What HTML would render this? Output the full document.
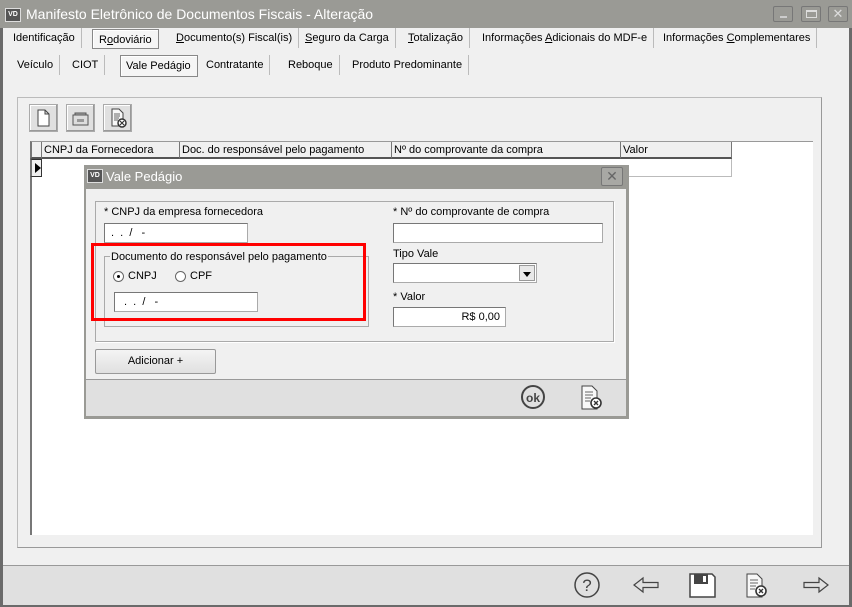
<!DOCTYPE html>
<html><head><meta charset="utf-8"><style>
*{box-sizing:border-box;margin:0;padding:0}
body{width:852px;height:607px;overflow:hidden;background:#6a6a6a;font-family:"Liberation Sans","DejaVu Sans",sans-serif;font-size:11px;color:#000;position:relative}
.abs{position:absolute}
.win{left:3px;top:0;width:846px;height:604px;background:#f0f0f0}
.title{left:0;top:0;width:852px;height:28px;background:#9a9a95;color:#fff;font-size:14px;line-height:28px}
.vd{display:inline-block;background:#555;color:#fff;font-size:7px;font-weight:bold;border:1px solid #ddd;width:16px;height:14px;line-height:12px;text-align:center;vertical-align:middle}
.tab{top:0;height:20px;line-height:20px;padding:0 6px;border-right:1px solid #bbb}
.sel{border:1px solid #888;background:#f5f5f5;box-shadow:inset 1px 1px #fff}
.cb{width:20px;height:16px;border:1px solid #777;border-radius:2px;top:6px}
.tb{width:29px;height:28px;top:104px;background:#e0e0e0;border:1px solid #aaa;box-shadow:inset -1px -1px #999,inset 1px 1px #fff}
.hd{top:142px;height:17px;line-height:17px;border-right:1px solid #777;border-bottom:2px solid #555;padding-left:2px;background:#f0f0f0}
.inp{background:#fff;border:1px solid #aaa;border-top-color:#777;border-left-color:#777;height:20px;line-height:18px;padding-left:6px}
u{text-decoration:underline}
</style></head><body>
<div class="abs win"></div>
<div class="abs title"><span style="position:absolute;left:5px;top:0"><span class="vd">VD</span></span><span style="position:absolute;left:26px">Manifesto Eletrônico de Documentos Fiscais - Alteração</span>
<div class="abs cb" style="left:773px"><div class="abs" style="left:6px;top:9px;width:7px;height:2px;background:#ccc"></div></div>
<div class="abs cb" style="left:801px"><div class="abs" style="left:4px;top:3px;width:11px;height:8px;border:1px solid #ddd;border-top-width:2px"></div></div>
<div class="abs cb" style="left:828px;color:#ddd;font-size:13px;line-height:14px;text-align:center;font-weight:bold">✕</div>
</div>
<div class="abs" style="left:7px;top:28px;height:21px;width:820px">
<div class="abs tab" style="left:0">Identificação</div>
<div class="abs tab sel" style="left:85px;top:1px;height:20px">R<u>o</u>doviário</div>
<div class="abs tab" style="left:163px"><u>D</u>ocumento(s) Fiscal(is)</div>
<div class="abs tab" style="left:291px;padding-left:7px"><u>S</u>eguro da Carga</div>
<div class="abs tab" style="left:393px;padding-left:8px"><u>T</u>otalização</div>
<div class="abs tab" style="left:468px;padding-left:7px">Informações <u>A</u>dicionais do MDF-e</div>
<div class="abs tab" style="left:649px;padding-left:7px">Informações <u>C</u>omplementares</div>
</div>
<div class="abs" style="left:10px;top:55px;height:21px;width:480px">
<div class="abs tab" style="left:0;padding-left:7px">Veículo</div>
<div class="abs tab" style="left:52px;padding-left:10px">CIOT</div>
<div class="abs tab sel" style="left:110px;top:0;height:22px;padding-left:5px">Vale Pedágio</div>
<div class="abs tab" style="left:188px;padding-left:8px">Contratante</div>
<div class="abs tab" style="left:270px;padding-left:8px">Reboque</div>
<div class="abs tab" style="left:333px;padding-left:9px">Produto Predominante</div>
</div>
<div class="abs" style="left:17px;top:97px;width:805px;height:451px;border:1px solid #999;border-top-color:#bbb;border-left-color:#bbb;background:#f0f0f0"></div>
<div class="abs tb" style="left:29px"><svg width="27" height="26"><path d="M8 5h7l4 4v12H8z M15 5v4h4" fill="#fff" stroke="#444" stroke-width="1"/></svg></div>
<div class="abs tb" style="left:66px"><svg width="27" height="26"><path d="M6 10h15v10H6z" fill="#ddd" stroke="#555"/><path d="M8 8h11v2H8z" fill="#aaa" stroke="#555"/><rect x="10" y="14" width="7" height="3" fill="#999"/></svg></div>
<div class="abs tb" style="left:103px"><svg width="27" height="26"><path d="M8 4h7l4 4v13H8z" fill="#f8f8f8" stroke="#444"/><path d="M10 9h6M10 11h6M10 13h5M10 15h4" stroke="#666"/><circle cx="18" cy="18" r="4" fill="#fff" stroke="#333" stroke-width="1.5"/><path d="M16 16l4 4M20 16l-4 4" stroke="#333" stroke-width="1.2"/></svg></div>
<div class="abs" style="left:30px;top:141px;width:783px;height:394px;background:#fff;border-left:2px solid #777;border-top:1px solid #999"></div>
<div class="abs hd" style="left:30px;width:12px;border-left:2px solid #777"></div>
<div class="abs hd" style="left:42px;width:138px">CNPJ da Fornecedora</div>
<div class="abs hd" style="left:180px;width:212px">Doc. do responsável pelo pagamento</div>
<div class="abs hd" style="left:392px;width:229px">Nº do comprovante da compra</div>
<div class="abs hd" style="left:621px;width:111px">Valor</div>
<div class="abs" style="left:30px;top:159px;width:12px;height:18px;border:1px solid #333;border-left:2px solid #777;background:#f0f0f0"><div class="abs" style="left:3px;top:3px;width:0;height:0;border-left:6px solid #000;border-top:5px solid transparent;border-bottom:5px solid transparent"></div></div>
<div class="abs" style="left:621px;top:159px;width:111px;height:18px;border-right:1px solid #bbb;border-bottom:1px solid #bbb"></div>
<div class="abs" style="left:3px;top:565px;width:846px;height:40px;background:#e0e0e0;border-top:1px solid #999"></div>
<svg class="abs" style="left:570px;top:568px" width="280" height="36">
<circle cx="17" cy="17" r="12" fill="none" stroke="#444" stroke-width="1.5"/><text x="17" y="23" font-size="17" text-anchor="middle" font-family="Liberation Sans" fill="#444">?</text>
<path d="M64 17l9-7v4.5h15v5h-15V24z" fill="none" stroke="#444" stroke-width="1.2"/>
<path d="M120 6h22l3 3v20h-25z" fill="#fff" stroke="#444" stroke-width="1.5"/><rect x="124" y="6" width="14" height="10" fill="#444"/><rect x="133" y="8" width="3" height="6" fill="#fff"/>
<path d="M177 6h10l5 5v18h-15z" fill="#f8f8f8" stroke="#444"/><path d="M180 12h8M180 15h8M180 18h6M180 21h5" stroke="#666"/><circle cx="191" cy="23" r="5" fill="#fff" stroke="#333" stroke-width="1.6"/><path d="M189 21l4 4M193 21l-4 4" stroke="#333" stroke-width="1.4"/>
<path d="M258 17l-9-7v4.5h-15v5h15V24z" fill="none" stroke="#444" stroke-width="1.2"/>
</svg>
<div class="abs" style="left:84px;top:165px;width:545px;height:254px;background:#9a9a95">
<div class="abs" style="left:3px;top:4px"><span class="vd">VD</span></div>
<div class="abs" style="left:22px;top:0;height:24px;line-height:24px;color:#fff;font-size:13px">Vale Pedágio</div>
<div class="abs" style="left:517px;top:2px;width:22px;height:19px;border:1px solid #777;border-radius:2px;background:#a8a8a4;color:#666;text-align:center;font-size:14px;line-height:17px;font-weight:bold">✕</div>
<div class="abs" style="left:2px;top:24px;width:540px;height:190px;background:#f0f0f0"></div>
<div class="abs" style="left:2px;top:214px;width:540px;height:37px;background:#e0e0e0;border-top:1px solid #999"></div>
</div>
<div class="abs" style="left:95px;top:201px;width:519px;height:141px;border:1px solid #aaa;box-shadow:1px 1px #fff"></div>
<div class="abs" style="left:104px;top:206px">* CNPJ da empresa fornecedora</div>
<div class="abs inp" style="left:104px;top:223px;width:144px">.&nbsp;&nbsp;.&nbsp;&nbsp;/&nbsp;&nbsp;&nbsp;-</div>
<div class="abs" style="left:104px;top:256px;width:265px;height:71px;border:1px solid #aaa"></div>
<div class="abs" style="left:110px;top:251px;background:#f0f0f0;padding:0 1px">Documento do responsável pelo pagamento</div>
<div class="abs" style="left:113px;top:271px;width:11px;height:11px;border-radius:50%;border:1px solid #666;background:#fff"><div class="abs" style="left:3px;top:3px;width:3px;height:3px;border-radius:50%;background:#000"></div></div>
<div class="abs" style="left:128px;top:270px">CNPJ</div>
<div class="abs" style="left:175px;top:271px;width:11px;height:11px;border-radius:50%;border:1px solid #666;background:#fff"></div>
<div class="abs" style="left:190px;top:270px">CPF</div>
<div class="abs inp" style="left:114px;top:292px;width:144px;padding-left:9px">.&nbsp;&nbsp;.&nbsp;&nbsp;/&nbsp;&nbsp;&nbsp;-</div>
<div class="abs" style="left:91px;top:243px;width:275px;height:78px;border:3px solid #f00"></div>
<div class="abs" style="left:393px;top:206px">* Nº do comprovante de compra</div>
<div class="abs inp" style="left:393px;top:223px;width:210px"></div>
<div class="abs" style="left:393px;top:248px">Tipo Vale</div>
<div class="abs inp" style="left:393px;top:263px;width:144px"><div class="abs" style="right:1px;top:1px;width:16px;height:16px;background:#e8e8e8;border:1px solid #999"><div class="abs" style="left:3px;top:6px;border-top:5px solid #000;border-left:4px solid transparent;border-right:4px solid transparent"></div></div></div>
<div class="abs" style="left:393px;top:291px">* Valor</div>
<div class="abs inp" style="left:393px;top:307px;width:113px;text-align:right;padding-right:5px">R$ 0,00</div>
<div class="abs" style="left:95px;top:349px;width:121px;height:25px;border:1px solid #999;border-radius:2px;background:linear-gradient(#f4f4f4,#e0e0e0);text-align:center;line-height:23px">Adicionar +</div>
<svg class="abs" style="left:515px;top:381px" width="110" height="34">
<circle cx="18" cy="16" r="11" fill="none" stroke="#444" stroke-width="2"/><text x="18" y="21" font-size="12" font-weight="bold" text-anchor="middle" font-family="Liberation Sans" fill="#444">ok</text>
<path d="M67 5h10l5 5v18H67z" fill="#f8f8f8" stroke="#444"/><path d="M70 11h8M70 14h8M70 17h6M70 20h5" stroke="#666"/><circle cx="81" cy="22" r="5" fill="#fff" stroke="#333" stroke-width="1.6"/><path d="M79 20l4 4M83 20l-4 4" stroke="#333" stroke-width="1.4"/>
</svg>
</body></html>
